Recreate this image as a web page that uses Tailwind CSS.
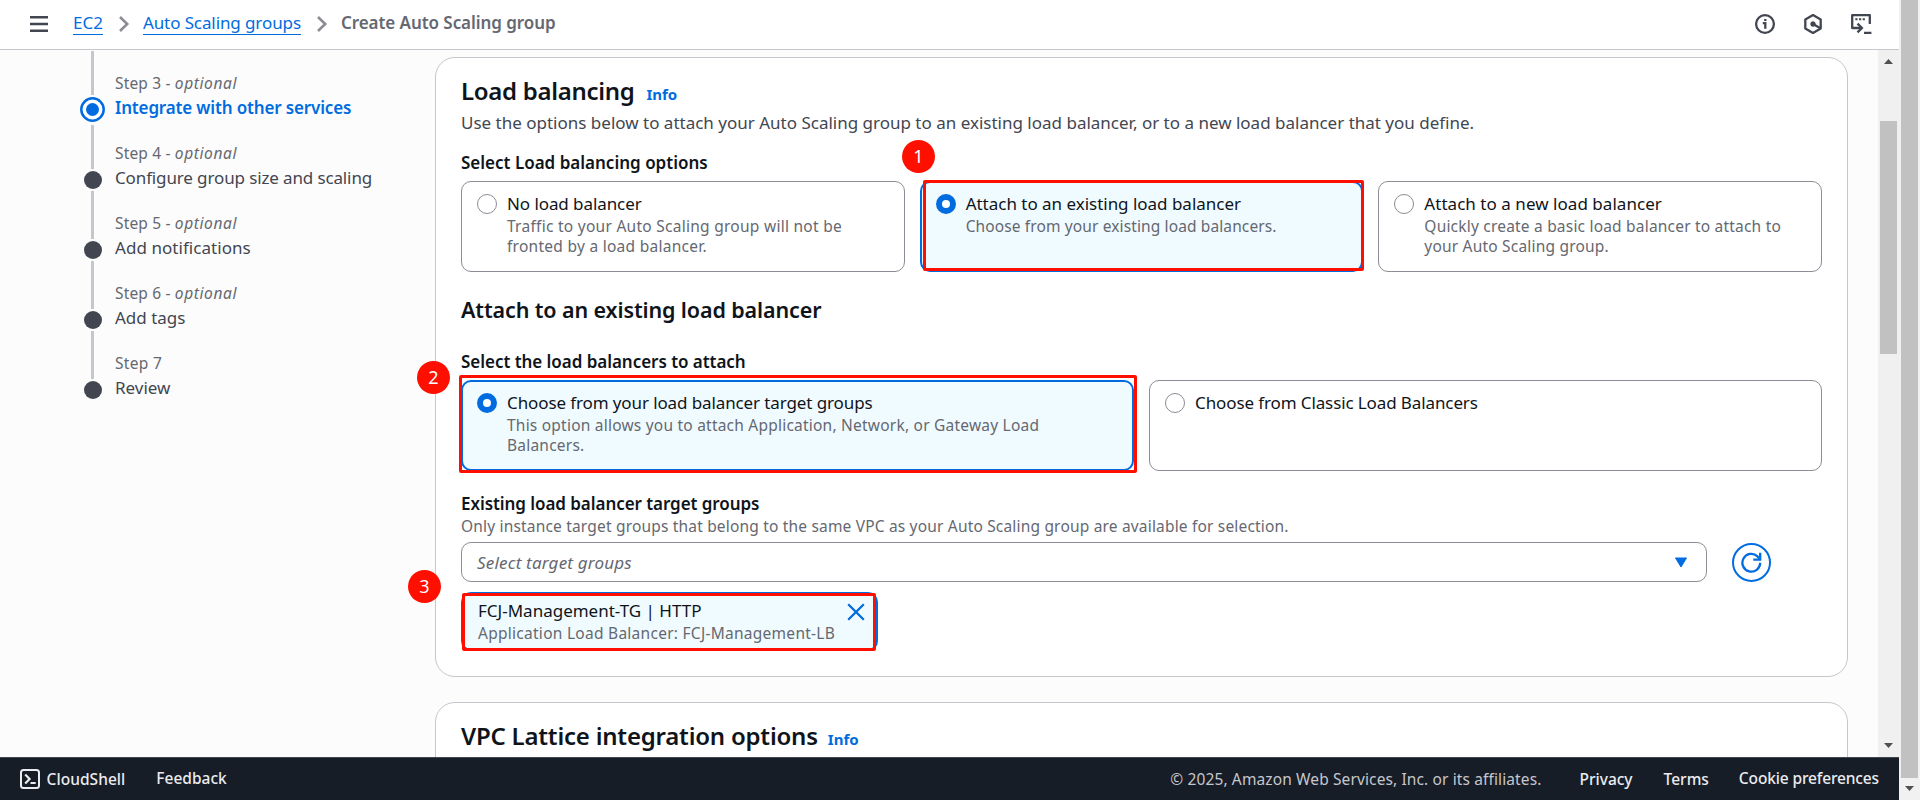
<!DOCTYPE html>
<html lang="en">
<head>
<meta charset="utf-8">
<title>Create Auto Scaling group</title>
<script src="https://cdn.jsdelivr.net/npm/@tailwindcss/browser@4"></script>
</head>
<body class="relative flex h-[800px] w-[1920px] overflow-hidden bg-[#fcfcfc] font-['Noto_Sans',sans-serif] text-[17px] leading-[25px] whitespace-nowrap text-[#0f141a]">

<div class="flex h-full w-[1899px] flex-col">

  <!-- Breadcrumb bar -->
  <header class="flex h-[50px] shrink-0 items-center justify-between border-b border-[#c6c6cd] bg-white pr-[27px] pb-[2px] pl-[29px]">
    <div class="flex items-center">
      <svg class="mr-[24px] h-[18px] w-[20px]" viewBox="0 0 20 18" stroke="#424650" stroke-width="2.4"><path d="M1 2.2h18M1 9h18M1 15.8h18"/></svg>
      <nav class="flex items-center">
        <a class="h-[22px] border-b-[1.5px] border-[#006ce0] leading-[20px] text-[#006ce0]">EC2</a>
        <svg class="mr-[13px] ml-[15px] h-[16px] w-[12px]" viewBox="0 0 12 16" fill="none" stroke="#8c8c94" stroke-width="2.6"><path d="M2 1l7.2 7L2 15"/></svg>
        <a class="h-[22px] border-b-[1.5px] border-[#006ce0] leading-[20px] tracking-[-0.1px] text-[#006ce0]">Auto Scaling groups</a>
        <svg class="mr-[13px] ml-[15px] h-[16px] w-[12px]" viewBox="0 0 12 16" fill="none" stroke="#8c8c94" stroke-width="2.6"><path d="M2 1l7.2 7L2 15"/></svg>
        <span class="h-[22px] leading-[20px] font-semibold tracking-[-0.06px] text-[#656871]">Create Auto Scaling group</span>
      </nav>
    </div>
    <div class="flex items-center gap-[26px]">
      <svg class="size-[22px]" viewBox="0 0 22 22" fill="none" stroke="#424650" stroke-width="2.3"><circle cx="11" cy="11" r="8.9"/><path d="M11.3 6v2M8.8 10.2h2.5v5.6"/></svg>
      <svg class="size-[22px]" viewBox="0 0 22 22" fill="none" stroke="#424650" stroke-width="2.3" stroke-linejoin="round"><path d="M11 2.1l7.7 4.4v9L11 19.9l-7.7-4.4v-9z"/><circle cx="11" cy="11" r="2.4" fill="#424650" stroke="none"/><circle cx="11" cy="11" r="1.4"/><path d="M11 11l7 4"/></svg>
      <svg class="size-[22px]" viewBox="0 0 22 22" fill="none" stroke="#424650" stroke-width="2.3"><path d="M11 15H2.2V2.2h17.6V11" stroke-linejoin="round"/><path d="M5.3 6.2h2.2M9 6.2h2.2M12.7 6.2h2.2" stroke-width="2"/><path d="M7.5 10.6l4.4 4.4-4.4 4.4M14 19.9h7.4"/></svg>
    </div>
  </header>

  <div class="flex h-[707px] shrink-0">
    <div class="flex w-[1878px] overflow-hidden">

      <!-- Wizard steps -->
      <aside class="w-[435px] shrink-0 pl-[80px]">
        <div class="flex h-[22px] w-[25px] justify-center pt-px"><div class="w-[3px] bg-[#c6c6cd]"></div></div>
        <ol>
          <li class="flex h-[70px] gap-[10px]">
            <div class="flex w-[25px] flex-col items-center">
              <div class="h-[23px] w-[3px] bg-[#c6c6cd]"></div>
              <svg class="mt-[2px] mb-[3px] size-[25px] shrink-0" viewBox="0 0 25 25"><circle cx="12.5" cy="12.5" r="11.2" fill="#fff" stroke="#006ce0" stroke-width="2.5"/><circle cx="12.5" cy="12.5" r="6.5" fill="#006ce0"/></svg>
              <div class="w-[3px] grow bg-[#c6c6cd]"></div>
            </div>
            <div class="text-[#656871]">
              <div class="text-[15.5px] leading-[22px] tracking-[0.17px]">Step 3 - <i class="tracking-[0.6px]">optional</i></div>
              <div class="mt-px font-semibold tracking-[-0.15px] text-[#006ce0]">Integrate with other services</div>
            </div>
          </li>
          <li class="flex h-[70px] gap-[10px]">
            <div class="flex w-[25px] flex-col items-center">
              <div class="h-[27px] w-[3px] bg-[#c6c6cd]"></div>
              <div class="my-[2px] size-[18px] shrink-0 rounded-full bg-[#424650]"></div>
              <div class="w-[3px] grow bg-[#c6c6cd]"></div>
            </div>
            <div class="text-[#656871]">
              <div class="text-[15.5px] leading-[22px] tracking-[0.17px]">Step 4 - <i class="tracking-[0.6px]">optional</i></div>
              <div class="mt-px tracking-[-0.13px] text-[#424650]">Configure group size and scaling</div>
            </div>
          </li>
          <li class="flex h-[70px] gap-[10px]">
            <div class="flex w-[25px] flex-col items-center">
              <div class="h-[27px] w-[3px] bg-[#c6c6cd]"></div>
              <div class="my-[2px] size-[18px] shrink-0 rounded-full bg-[#424650]"></div>
              <div class="w-[3px] grow bg-[#c6c6cd]"></div>
            </div>
            <div class="text-[#656871]">
              <div class="text-[15.5px] leading-[22px] tracking-[0.17px]">Step 5 - <i class="tracking-[0.6px]">optional</i></div>
              <div class="mt-px tracking-[0.05px] text-[#424650]">Add notifications</div>
            </div>
          </li>
          <li class="flex h-[70px] gap-[10px]">
            <div class="flex w-[25px] flex-col items-center">
              <div class="h-[27px] w-[3px] bg-[#c6c6cd]"></div>
              <div class="my-[2px] size-[18px] shrink-0 rounded-full bg-[#424650]"></div>
              <div class="w-[3px] grow bg-[#c6c6cd]"></div>
            </div>
            <div class="text-[#656871]">
              <div class="text-[15.5px] leading-[22px] tracking-[0.17px]">Step 6 - <i class="tracking-[0.6px]">optional</i></div>
              <div class="mt-px text-[#424650]">Add tags</div>
            </div>
          </li>
          <li class="flex h-[70px] gap-[10px]">
            <div class="flex w-[25px] flex-col items-center">
              <div class="h-[27px] w-[3px] bg-[#c6c6cd]"></div>
              <div class="my-[2px] size-[18px] shrink-0 rounded-full bg-[#424650]"></div>
            </div>
            <div class="text-[#656871]">
              <div class="text-[15.5px] leading-[22px] tracking-[0.3px]">Step 7</div>
              <div class="mt-px text-[#424650]">Review</div>
            </div>
          </li>
        </ol>
      </aside>

      <main class="w-[1413px] shrink-0 pt-[7px]">
        <section class="h-[620px] rounded-[20px] border border-[#c6c6cd] bg-white px-[25px] pt-[18px]">
          <div class="flex h-[30px] items-baseline gap-[12px] leading-[30px]">
            <h2 class="text-[24px] font-semibold tracking-[-0.3px]">Load balancing</h2>
            <a class="text-[15px] font-bold text-[#006ce0]">Info</a>
          </div>
          <p class="mt-[4px] text-[#424650]">Use the options below to attach your Auto Scaling group to an existing load balancer, or to a new load balancer that you define.</p>

          <div class="mt-[15px] font-semibold">Select Load balancing options</div>
          <div class="mt-[6px] grid h-[91px] grid-cols-3 gap-[15px]">
            <div class="flex gap-[10px] rounded-[10px] border border-[#8c8c94] px-[15px] pt-[9px]">
              <div class="mt-[3px] size-[20px] shrink-0 rounded-full border-[1.5px] border-[#8c8c94]"></div>
              <div>
                <div class="tracking-[-0.08px]">No load balancer</div>
                <div class="text-[15.5px] leading-[20px] tracking-[0.27px] text-[#656871]">Traffic to your Auto Scaling group will not be<br>fronted by a load balancer.</div>
              </div>
            </div>
            <div class="flex gap-[10px] rounded-[10px] border-2 border-[#006ce0] bg-[#f0fbff] px-[14px] pt-[8px]">
              <div class="mt-[3px] size-[20px] shrink-0 rounded-full border-[6px] border-[#006ce0] bg-white"></div>
              <div>
                <div class="tracking-[-0.02px]">Attach to an existing load balancer</div>
                <div class="text-[15.5px] leading-[20px] tracking-[0.12px] text-[#656871]">Choose from your existing load balancers.</div>
              </div>
            </div>
            <div class="flex gap-[10px] rounded-[10px] border border-[#8c8c94] px-[15px] pt-[9px]">
              <div class="mt-[3px] size-[20px] shrink-0 rounded-full border-[1.5px] border-[#8c8c94]"></div>
              <div>
                <div class="tracking-[0.04px]">Attach to a new load balancer</div>
                <div class="text-[15.5px] leading-[20px] tracking-[0.2px] text-[#656871]">Quickly create a basic load balancer to attach to<br>your Auto Scaling group.</div>
              </div>
            </div>
          </div>

          <h3 class="mt-[24px] text-[21.5px] leading-[28px] font-semibold tracking-[-0.12px]">Attach to an existing load balancer</h3>

          <div class="mt-[25px] font-semibold tracking-[-0.04px]">Select the load balancers to attach</div>
          <div class="mt-[6px] grid h-[91px] grid-cols-2 gap-[15px]">
            <div class="flex gap-[10px] rounded-[10px] border-2 border-[#006ce0] bg-[#f0fbff] px-[14px] pt-[8px]">
              <div class="mt-[3px] size-[20px] shrink-0 rounded-full border-[6px] border-[#006ce0] bg-white"></div>
              <div>
                <div class="tracking-[-0.11px]">Choose from your load balancer target groups</div>
                <div class="text-[15.5px] leading-[20px] tracking-[0.22px] text-[#656871]">This option allows you to attach Application, Network, or Gateway Load<br>Balancers.</div>
              </div>
            </div>
            <div class="flex gap-[10px] rounded-[10px] border border-[#8c8c94] px-[15px] pt-[9px]">
              <div class="mt-[3px] size-[20px] shrink-0 rounded-full border-[1.5px] border-[#8c8c94]"></div>
              <div class="tracking-[-0.11px]">Choose from Classic Load Balancers</div>
            </div>
          </div>

          <div class="mt-[20px] font-semibold tracking-[-0.06px]">Existing load balancer target groups</div>
          <div class="text-[15.5px] leading-[20px] tracking-[0.18px] text-[#656871]">Only instance target groups that belong to the same VPC as your Auto Scaling group are available for selection.</div>
          <div class="mt-[6px] flex h-[40px] items-center gap-[25px]">
            <div class="flex h-full w-[1246px] items-center justify-between rounded-[10px] border border-[#8c8c94] pr-[18px] pl-[15px]">
              <i class="tracking-[0.2px] text-[#656871]">Select target groups</i>
              <svg class="h-[11px] w-[14px]" viewBox="0 0 14 11"><path d="M1.5 1h11L7 10z" fill="#006ce0" stroke="#006ce0" stroke-linejoin="round"/></svg>
            </div>
            <div class="flex size-[39px] items-center justify-center rounded-full border-2 border-[#006ce0]">
              <svg class="size-[21px]" viewBox="0 0 21 21" fill="none" stroke="#006ce0" stroke-width="2.3"><path d="M19.2 10.8a8.9 8.9 0 1 1-2.8-6.5l2.4 2.6"/><path d="M19.2 .8v6.8h-6.9"/></svg>
            </div>
          </div>
          <div class="mt-[10px] flex h-[59px] w-[417px] justify-between rounded-[10px] border-2 border-[#006ce0] bg-[#f0fbff] pt-[4px] pr-[11px] pl-[15px]">
            <div>
              <div>FCJ-Management-TG | HTTP</div>
              <div class="text-[15.5px] leading-[20px] tracking-[0.27px] text-[#656871]">Application Load Balancer: FCJ-Management-LB</div>
            </div>
            <svg class="mt-[5px] size-[18px]" viewBox="0 0 18 18" stroke="#006ce0" stroke-width="2.3"><path d="M1.2 1.2l15.6 15.6M16.8 1.2L1.2 16.8"/></svg>
          </div>
        </section>

        <section class="mt-[25px] h-[200px] rounded-[20px] border border-[#c6c6cd] bg-white px-[25px] pt-[18px]">
          <div class="flex h-[30px] items-baseline gap-[10px] leading-[30px]">
            <h2 class="text-[24px] font-semibold tracking-[-0.21px]">VPC Lattice integration options</h2>
            <a class="text-[15px] font-bold text-[#006ce0]">Info</a>
          </div>
        </section>
      </main>
    </div>

    <!-- Content scrollbar -->
    <div class="flex w-[21px] flex-col items-center justify-between bg-[#f0f0f0] pt-[9px] pb-[9px]">
      <svg class="h-[5px] w-[9px] shrink-0" viewBox="0 0 9 5"><path d="M0 5L4.5 0 9 5z" fill="#505050"/></svg>
      <div class="mt-[57px] mb-auto h-[233px] w-[17px] bg-[#c1c1c1]"></div>
      <svg class="h-[5px] w-[9px] shrink-0" viewBox="0 0 9 5"><path d="M0 0h9L4.5 5z" fill="#505050"/></svg>
    </div>
  </div>

  <footer class="flex grow items-center border-t border-[#424650] bg-[#161d26] pr-[20px] pl-[20px] text-[15.5px] leading-[22px] font-medium text-[#ebebf0]">
    <svg class="mr-[6.5px] size-[20px]" viewBox="0 0 20 20" fill="none" stroke="#ebebf0" stroke-width="2"><rect x="1" y="1" width="18" height="18" rx="2.5"/><path d="M5.2 5.4L9.6 10l-4.4 4.6M10.5 14h5.2" stroke-width="2.2"/></svg>
    <span class="tracking-[0.05px]">CloudShell</span>
    <span class="-mt-[2px] ml-[31px]">Feedback</span>
    <span class="ml-auto font-normal tracking-[0.12px] text-[#c6c6cd]">© 2025, Amazon Web Services, Inc. or its affiliates.</span>
    <span class="ml-[38px]">Privacy</span>
    <span class="ml-[31px]">Terms</span>
    <span class="-mt-[2px] ml-[30px] tracking-[-0.14px]">Cookie preferences</span>
  </footer>
</div>

<!-- Window scrollbar -->
<div class="flex w-[21px] flex-col items-center bg-[#f1f1f1]">
  <div class="h-[778px] w-[17px] bg-[#c1c1c1]"></div>
  <svg class="mt-[8px] h-[5px] w-[9px]" viewBox="0 0 9 5"><path d="M0 0h9L4.5 5z" fill="#505050"/></svg>
</div>

<!-- Callout frames and numbers -->
<div class="absolute top-[180px] left-[923px] h-[91px] w-[441px] rounded-[2px] border-3 border-[#ff0f00]"></div>
<div class="absolute top-[375px] left-[459px] h-[98px] w-[678px] rounded-[2px] border-3 border-[#ff0f00]"></div>
<div class="absolute top-[593px] left-[462px] h-[58px] w-[414px] rounded-[2px] border-3 border-[#ff0f00]"></div>
<div class="absolute top-[140px] left-[902px] flex size-[33px] items-center justify-center rounded-full bg-[#ff0f00] text-[18px] text-white">1</div>
<div class="absolute top-[361px] left-[417px] flex size-[33px] items-center justify-center rounded-full bg-[#ff0f00] text-[18px] text-white">2</div>
<div class="absolute top-[570px] left-[408px] flex size-[33px] items-center justify-center rounded-full bg-[#ff0f00] text-[18px] text-white">3</div>

</body>
</html>
